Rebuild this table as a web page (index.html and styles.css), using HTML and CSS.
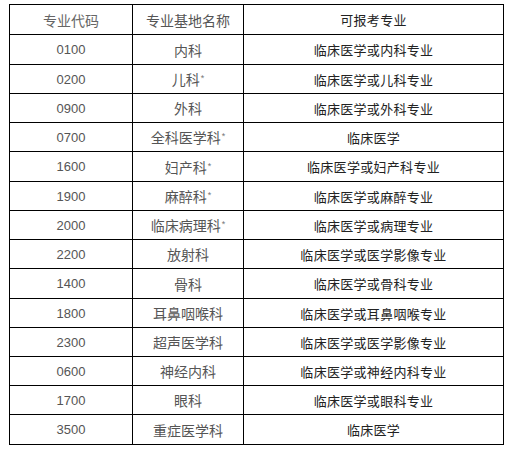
FILE: index.html
```html
<!DOCTYPE html>
<html lang="zh-CN">
<head>
<meta charset="utf-8">
<link rel="stylesheet" href="styles.css">
</head>
<body>
<table class="grid">
  <colgroup><col class="c1"><col class="c2"><col class="c3"></colgroup>
  <thead>
    <tr class="tall"><th class="code">专业代码</th><th class="name">专业基地名称</th><th class="major">可报考专业</th></tr>
  </thead>
  <tbody>
    <tr class="tall"><td class="code">0100</td><td class="name">内科</td><td class="major">临床医学或内科专业</td></tr>
    <tr><td class="code">0200</td><td class="name">儿科<sup>*</sup></td><td class="major">临床医学或儿科专业</td></tr>
    <tr><td class="code">0900</td><td class="name">外科</td><td class="major">临床医学或外科专业</td></tr>
    <tr><td class="code">0700</td><td class="name">全科医学科<sup>*</sup></td><td class="major">临床医学</td></tr>
    <tr class="tall"><td class="code">1600</td><td class="name">妇产科<sup>*</sup></td><td class="major">临床医学或妇产科专业</td></tr>
    <tr><td class="code">1900</td><td class="name">麻醉科<sup>*</sup></td><td class="major">临床医学或麻醉专业</td></tr>
    <tr><td class="code">2000</td><td class="name">临床病理科<sup>*</sup></td><td class="major">临床医学或病理专业</td></tr>
    <tr><td class="code">2200</td><td class="name">放射科</td><td class="major">临床医学或医学影像专业</td></tr>
    <tr class="tall"><td class="code">1400</td><td class="name">骨科</td><td class="major">临床医学或骨科专业</td></tr>
    <tr><td class="code">1800</td><td class="name">耳鼻咽喉科</td><td class="major">临床医学或耳鼻咽喉专业</td></tr>
    <tr><td class="code">2300</td><td class="name">超声医学科</td><td class="major">临床医学或医学影像专业</td></tr>
    <tr><td class="code">0600</td><td class="name">神经内科</td><td class="major">临床医学或神经内科专业</td></tr>
    <tr><td class="code">1700</td><td class="name">眼科</td><td class="major">临床医学或眼科专业</td></tr>
    <tr class="tall"><td class="code">3500</td><td class="name">重症医学科</td><td class="major">临床医学</td></tr>
  </tbody>
</table>
</body>
</html>
```
FILE: styles.css
```css
html, body {
  background: #fff;
}
body {
  margin: 4px 0 0 9px;
  font-family: "Noto Sans CJK SC", "Liberation Sans", sans-serif;
}
.grid {
  border-collapse: collapse;
  table-layout: fixed;
  width: 494px;
}
.c1 { width: 123px; }
.c2 { width: 111px; }
.c3 { width: 260px; }
.grid th, .grid td {
  border: 1px solid #000;
  padding: 0;
  text-align: center;
  vertical-align: middle;
  font-weight: normal;
  line-height: 1;
}
.grid tr { height: 29px; }
.grid tr.tall { height: 30px; }
.code {
  font-family: "Liberation Sans", "Noto Sans CJK SC", sans-serif;
  font-size: 13px;
  color: #555;
}
th.code {
  font-family: "Noto Sans CJK SC", sans-serif;
  font-size: 14px;
  color: #666;
}
.name {
  font-size: 14px;
  color: #555;
}
.major {
  font-size: 13px;
  color: #222;
  letter-spacing: 0.3px;
}
sup {
  font-family: "Liberation Sans", sans-serif;
  font-size: 9px;
  vertical-align: 4px;
  margin-left: 1px;
  line-height: 0;
  color: #777;
}
```
